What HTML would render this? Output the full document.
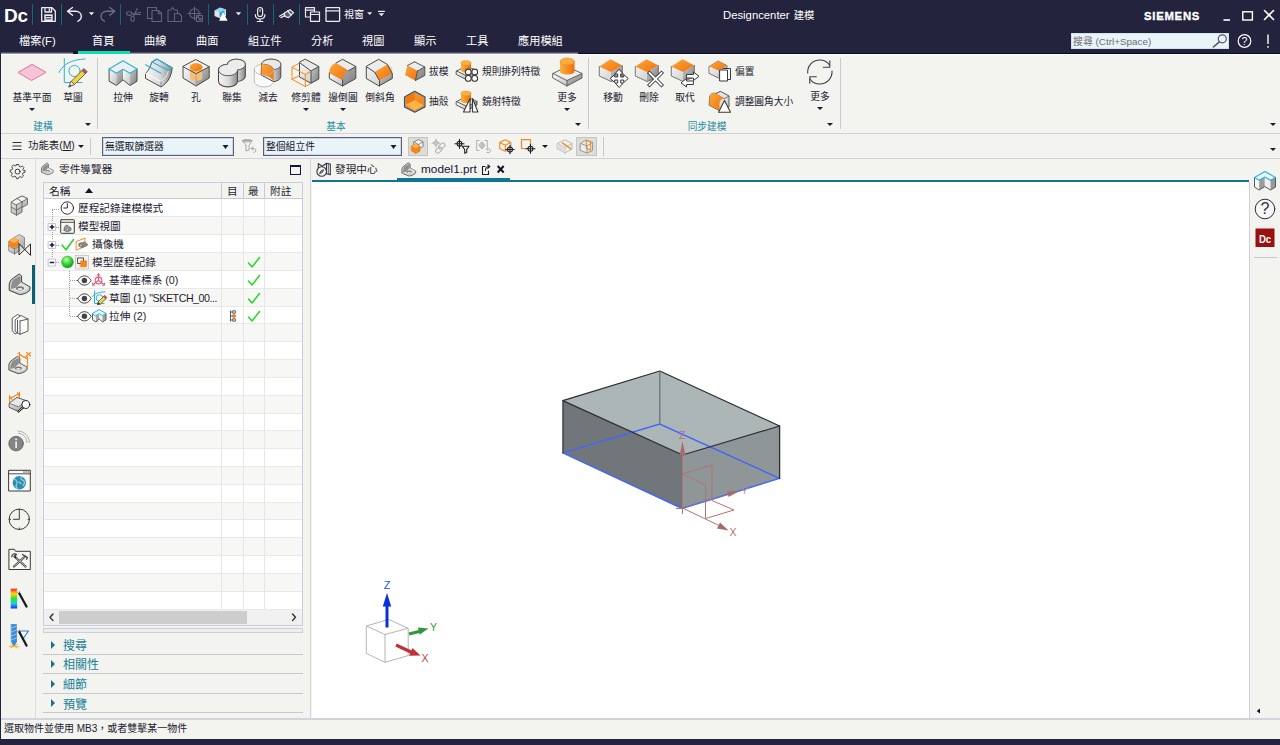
<!DOCTYPE html>
<html lang="zh-Hant">
<head>
<meta charset="utf-8">
<title>Designcenter 建模</title>
<style>
*{box-sizing:border-box;margin:0;padding:0}
html,body{width:1280px;height:745px;overflow:hidden}
body{position:relative;background:#f3f3ef;font-family:"Liberation Sans","Noto Sans CJK TC",sans-serif;font-size:10.67px;color:#1b1b30;-webkit-font-smoothing:antialiased}
.abs{position:absolute}
.t{position:absolute;white-space:nowrap;line-height:1}
svg{position:absolute;overflow:visible}
/* header */
#hdr{left:0;top:0;width:1280px;height:54px;background:#23233d}
#hdr .t{color:#fff}
.tab{font-size:11.2px;top:36px}
#uline{left:78px;top:51px;width:52px;height:3px;background:#0be0ae}
#search{left:1071px;top:33px;width:158px;height:16px;background:#e9f4f8;border:1px solid #d4e2ea}
#search .t{color:#6c6c7a;font-size:9.9px;left:1px;top:2.5px}
/* ribbon */
#ribbon{left:1px;top:54px;width:1279px;height:79px;background:#f3f3ef;border-top:1px solid #fdfdfd}
.rl{font-size:9.8px;color:#1b1b30;transform:translateX(-50%)}
.sl{font-size:9.7px;color:#1b1b30}
.gl{font-size:9.7px;color:#1d8ca3;transform:translateX(-50%);top:122px}
.vsep{position:absolute;width:1px;background:#c9c9d3}
.hsep{position:absolute;height:1px;background:#d2d2da}
.dd{position:absolute;width:0;height:0;border-left:3px solid transparent;border-right:3px solid transparent;border-top:3.5px solid #1b1b30;transform:translateX(-3px)}
/* selection bar */
.combo{position:absolute;top:137px;height:19px;background:#e9f4f8;border:1px solid #5c5c80;box-shadow:inset 0 0 0 1px #cfd6e6}
.combo .t{left:2px;top:4px;font-size:9.8px;color:#15152a}
.hl{position:absolute;background:#dcdcd8;border:1px solid #c4c4c0}
/* navigator */
#tree{left:43px;top:182px;width:260px;height:444px;background:#f0f0f0;border:1px solid #cdcde0;overflow:hidden}
.row{position:absolute;left:0;width:260px;height:18px;border-bottom:1px solid #e9e9e6;background:#fff}
.row.alt{background:#f7f7f5}
.tt{font-size:10.67px;color:#1b1b30}
.sec{font-size:12px;color:#1a8199;left:63px}
.tri{position:absolute;width:0;height:0;border-top:4px solid transparent;border-bottom:4px solid transparent;border-left:4.5px solid #1a7088}
#gfx{left:312px;top:182px;width:937px;height:536px;background:#fff}
</style>
</head>
<body>
<!-- ================= HEADER ================= -->
<div id="hdr" class="abs">
  <div class="t" style="left:4px;top:6px;font-size:19px;font-weight:bold;letter-spacing:-0.3px">Dc</div>
  <div class="abs" style="left:32px;top:4px;width:1px;height:21px;background:#0f6a72"></div>
  <div class="abs" style="left:61px;top:4px;width:1px;height:21px;background:#0f6a72"></div>
  <div class="abs" style="left:120px;top:4px;width:1px;height:21px;background:#0f6a72"></div>
  <div class="abs" style="left:208px;top:4px;width:1px;height:21px;background:#0f6a72"></div>
  <div class="abs" style="left:247px;top:4px;width:1px;height:21px;background:#0f6a72"></div>
  <div class="abs" style="left:273px;top:4px;width:1px;height:21px;background:#0f6a72"></div>
  <div class="abs" style="left:299px;top:4px;width:1px;height:21px;background:#0f6a72"></div>
  <div class="t" style="left:344px;top:10px;font-size:10px">視窗</div>
  <div class="t" style="left:723px;top:9px;font-size:11.3px;line-height:13px">Designcenter <span style="font-size:10.3px;margin-left:1px">建模</span></div>
  <div class="t" style="left:1144px;top:11px;font-size:11.3px;font-weight:bold;letter-spacing:0.75px;-webkit-text-stroke:0.35px #fff">SIEMENS</div>
  <div class="t tab" style="left:19px">檔案(F)</div>
  <div class="t tab" style="left:92px">首頁</div>
  <div class="t tab" style="left:144px">曲線</div>
  <div class="t tab" style="left:196px">曲面</div>
  <div class="t tab" style="left:248px">組立件</div>
  <div class="t tab" style="left:311px">分析</div>
  <div class="t tab" style="left:362px">視圖</div>
  <div class="t tab" style="left:414px">顯示</div>
  <div class="t tab" style="left:466px">工具</div>
  <div class="t tab" style="left:518px">應用模組</div>
  <div class="abs" style="left:1px;top:52px;width:577px;height:1px;background:#4e4e6a"></div><div class="abs" style="left:1px;top:53px;width:577px;height:1px;background:#9494ac"></div><div class="abs" style="left:578px;top:53px;width:702px;height:1px;background:#0a0a24"></div><div class="abs" style="left:73px;top:51px;width:5px;height:3px;background:#14142a"></div><div id="uline" class="abs"></div>
  <div id="search" class="abs"><div class="t">搜尋 (Ctrl+Space)</div></div>
</div>

<!-- header icons -->
<svg id="hicons" style="left:0;top:0" width="1280" height="53" viewBox="0 0 1280 53" fill="none" stroke-linecap="round" stroke-linejoin="round">
  <!-- save -->
  <g stroke="#ececf2" stroke-width="1.3">
    <path d="M41.7,7.7 H52 L55.3,11 V21.3 H41.7 Z"/>
    <path d="M45,7.7 V12 H51.5 V7.7"/>
    <rect x="44.3" y="14.3" width="8.4" height="7" fill="#ececf2" stroke="none"/>
  </g>
  <path d="M46,16.6 H51 M46,18.8 H51" stroke="#23233d" stroke-width="1"/>
  <path d="M49.3,8.6 V11" stroke="#ececf2" stroke-width="1.2"/>
  <!-- undo -->
  <path d="M72.5,7.5 L67.5,11.3 L72.5,15.2 M67.8,11.3 H75.5 C79.5,11.3 81.3,14 81.3,16.3 C81.3,18.5 80,20.3 77.8,21.3" stroke="#ececf2" stroke-width="1.4"/>
  <polygon points="88.8,12.3 94.2,12.3 91.5,15.3" fill="#ececf2"/>
  <!-- redo dim -->
  <path d="M109.8,7.5 L114.8,11.3 L109.8,15.2 M114.5,11.3 H106.8 C102.8,11.3 101,14 101,16.3 C101,18.5 102.3,20.3 104.5,21.3" stroke="#6d6d86" stroke-width="1.4"/>
  <!-- cut dim -->
  <g stroke="#62627c" stroke-width="1.1">
    <ellipse cx="129.3" cy="13.6" rx="2.6" ry="1.8"/>
    <ellipse cx="132.6" cy="18.7" rx="1.7" ry="2.5"/>
    <path d="M131.5,14 L140.5,12.5 M133.2,16.4 L137.5,8.3 M134,14.5 L140.5,14.5"/>
  </g>
  <!-- copy dim -->
  <g stroke="#62627c" stroke-width="1.1">
    <path d="M147.5,7.5 H156.5 V10.5 M152,18.5 H147.5 V7.5"/>
    <path d="M152,10.5 H158.5 L161.5,13.5 V21.5 H152 Z"/>
    <path d="M158.3,10.7 V13.7 H161.3"/>
  </g>
  <!-- paste dim -->
  <g stroke="#62627c" stroke-width="1.1">
    <path d="M174.5,21.5 H168 V10 H171 L172.7,7.5 L174.5,10 H177.5 V13"/>
    <path d="M174.5,13.5 H179 L181.5,16 V21.5 H174.5 Z"/>
  </g>
  <!-- target dim -->
  <g stroke="#62627c" stroke-width="1.1">
    <circle cx="194.5" cy="13.5" r="4.8"/>
    <path d="M194.5,7 V20 M188,13.5 H201"/>
    <path d="M196.5,15.5 H202.5 V21.5 H196.5 Z"/>
    <path d="M198,17 L201,20 M201,17.8 V20 H198.8"/>
  </g>
  <!-- colored cube + triangle -->
  <polygon points="214.5,10.5 220,7.5 226,9.5 226,16 220.5,18.5 214.5,16" fill="#dfe4e8"/>
  <polygon points="219.5,10.8 224.5,9 224.5,15.2 219.5,17.2" fill="#2aa6e0"/>
  <polygon points="215,10.8 220,8 225.8,9.6 220.8,12" fill="#8fd4f2"/>
  <polygon points="223,12 227.6,20.8 219.2,20.8" fill="#fff"/>
  <polygon points="235.8,12.3 241.2,12.3 238.5,15.3" fill="#ececf2"/>
  <!-- mic -->
  <g stroke="#ececf2" stroke-width="1.2">
    <rect x="257.6" y="7.5" width="5" height="9" rx="2.5"/>
    <path d="M255.3,14.5 C255.3,17.5 257.5,19 260.1,19 C262.7,19 264.9,17.5 264.9,14.5"/>
    <path d="M260.1,19 V21.3 M257.3,21.5 H262.9"/>
    <path d="M260.1,9.5 V11.5" stroke-width="1"/>
  </g>
  <!-- touch -->
  <g stroke="#ececf2" stroke-width="1.2">
    <path d="M284.5,13 L290,9.7 L293.6,12.6 L288.5,17.6 L284.3,16.2 Z" fill="#ececf2" fill-opacity=".25"/>
    <path d="M279.5,16.3 L284.5,13.2 M281,17.6 L285,15.5 M287.5,10.8 L291,15"/>
  </g>
  <!-- windows cascade -->
  <g stroke="#ececf2" stroke-width="1.2">
    <path d="M310,17 H305.5 V7.7 H314.5 V11.5"/>
    <path d="M305.5,10.2 H314.5"/>
    <rect x="310.5" y="12" width="9" height="9.3"/>
    <path d="M310.5,14.5 H319.5"/>
  </g>
  <!-- window -->
  <g stroke="#ececf2" stroke-width="1.3">
    <rect x="326" y="7.7" width="13.6" height="13.6" rx="0.5"/>
    <path d="M326,10.8 H339.6"/>
  </g>
  <polygon points="367.2,12.3 372.2,12.3 369.7,15.1" fill="#ececf2"/>
  <polygon points="378.6,13.2 384.2,13.2 381.4,16.3" fill="#ececf2"/>
  <path d="M378.4,11.4 H384.4" stroke="#ececf2" stroke-width="1.1"/>
  <!-- window controls -->
  <path d="M1223.5,20 H1230" stroke="#fff" stroke-width="1.6" stroke-linecap="butt"/>
  <rect x="1242.8" y="11.8" width="9.6" height="8.2" stroke="#fff" stroke-width="1.4" stroke-linejoin="miter"/>
  <path d="M1264.5,10.5 L1273.5,19.5 M1273.5,10.5 L1264.5,19.5" stroke="#fff" stroke-width="1.6"/>
  <!-- search magnifier -->
  <circle cx="1222.3" cy="38.8" r="4" stroke="#55556a" stroke-width="1.2"/>
  <path d="M1219.3,41.8 L1213.5,47" stroke="#55556a" stroke-width="1.6"/>
  <!-- help -->
  <circle cx="1244.5" cy="41" r="6.3" stroke="#fff" stroke-width="1.2"/>
  <!-- bang -->
  <path d="M1268,34.5 V44" stroke="#fff" stroke-width="1.4" stroke-linecap="butt"/>
  <path d="M1268,46 V47.8" stroke="#fff" stroke-width="1.4" stroke-linecap="butt"/>
  <text x="1244.5" y="44.7" font-size="10.5" fill="#fff" stroke="none" text-anchor="middle" font-family="Liberation Sans, sans-serif">?</text>
</svg>

<div class="abs" style="left:0;top:54px;width:1px;height:691px;background:#23233d"></div>

<!-- ================= RIBBON ================= -->
<div id="ribbon" class="abs"></div>
<!-- ribbon icons -->
<svg id="ricons" style="left:0;top:0" width="1280" height="160" viewBox="0 0 1280 160" stroke-linejoin="round" stroke-linecap="round">
  <defs>
    <linearGradient id="gL" x1="0" y1="0" x2="1" y2="1"><stop offset="0" stop-color="#fbfbfb"/><stop offset="1" stop-color="#c4c4c4"/></linearGradient>
    <linearGradient id="gD" x1="0" y1="0" x2="1" y2="1"><stop offset="0" stop-color="#c9c9c9"/><stop offset="1" stop-color="#7e7e7e"/></linearGradient>
    <linearGradient id="gT" x1="0" y1="0" x2="1" y2="1"><stop offset="0" stop-color="#ffffff"/><stop offset="1" stop-color="#dcdcdc"/></linearGradient>
    <linearGradient id="gH" x1="0" y1="0" x2="1" y2="0"><stop offset="0" stop-color="#f6f6f6"/><stop offset="0.55" stop-color="#d8d8d8"/><stop offset="1" stop-color="#8a8a8a"/></linearGradient>
    <linearGradient id="gO" x1="0" y1="0" x2="1" y2="1"><stop offset="0" stop-color="#fba83a"/><stop offset="1" stop-color="#f0720c"/></linearGradient>
    <linearGradient id="gOh" x1="0" y1="0" x2="1" y2="0"><stop offset="0" stop-color="#fbb040"/><stop offset="1" stop-color="#ee6f0a"/></linearGradient>
  </defs>
  <!-- 基準平面 -->
  <polygon points="18.3,72.3 32,64.3 46,72.3 32,80.3" fill="#f6c4d6" stroke="#e56f9c" stroke-width="1"/>
  <!-- 草圖 -->
  <g fill="none" stroke="#29b4dc" stroke-width="1">
    <path d="M64.3,58.5 V82.5 H82"/>
    <path d="M59,72.5 C63,64 72,59.5 85,59"/>
    <circle cx="74.5" cy="71" r="5.6"/>
  </g>
  <polygon points="71.3,81.3 82.3,70.3 85.5,73.5 74.5,84.5" fill="#f5d53e" stroke="#4a4a4a" stroke-width="0.8"/>
  <polygon points="82.3,70.3 84,68.600 87.200,71.800 85.500,73.500" fill="#e2445c" stroke="#4a4a4a" stroke-width="0.8"/>
  <polygon points="71.300,81.300 74.500,84.500 69,87" fill="#f2e6d0" stroke="#4a4a4a" stroke-width="0.8"/>
  <polygon points="69,87 70.300,84.700 71.400,85.900" fill="#222"/>
  <!-- 拉伸 -->
  <polygon points="109.1,69 116.4,73.3 116.4,85.5 109.1,81.2" fill="url(#gL)"/>
  <polygon points="116.4,73.3 123,69.3 123,79.8 116.4,85.5" fill="url(#gD)"/>
  <polygon points="123,69.3 130,73.3 130,85.5 123,79.8" fill="url(#gL)"/>
  <polygon points="130,73.3 137,69 137,81.2 130,85.5" fill="url(#gD)"/>
  <path d="M109.1,69 V81.2 L116.4,85.5 L123,79.8 L130,85.5 L137,81.2 V69" fill="none" stroke="#4a4a4a" stroke-width="1"/>
  <polygon points="109.1,69 123,60.8 137,69 130,73.3 123,69.3 116.4,73.3" fill="#efefef" stroke="#29b4dc" stroke-width="1.1"/>
  <!-- 旋轉 -->
  <path d="M152,62 C149.5,68 148.5,71 145.5,73.3 L145.5,78.4 L161,86.9 C168,83 171.5,76 172.2,67.7 L157.2,59.2 Z" fill="url(#gH)" stroke="#4a4a4a" stroke-width="1"/>
  <path d="M145.5,73.3 L161,81.5 C166,78 168,74 168.4,70.5" fill="none" stroke="#fafafa" stroke-width="0.9"/>
  <path d="M161,81.5 V86.9" fill="none" stroke="#6a6a6a" stroke-width="0.6"/>
  <path d="M152,62 L157.2,59.2 L172.2,67.7 L168.4,70.5 Z M145.5,64.8 L161,73.3" fill="none" stroke="#29b4dc" stroke-width="1.1"/>
  <!-- 孔 -->
  <polygon points="196.1,59.7 209.2,66.7 196.1,73.7 183,66.7" fill="#f1f1f1"/>
  <polygon points="183,66.7 196.1,73.7 196.1,86 183,78" fill="url(#gL)"/>
  <polygon points="196.1,73.7 209.2,66.7 209.2,78 196.1,86" fill="url(#gD)"/>
  <path d="M190,67.2 V78.5 C190,81.5 202.2,81.5 202.2,78.5 V67.2 Z" fill="#f2c07a"/>
  <ellipse cx="196.1" cy="67.2" rx="6.1" ry="3.7" fill="url(#gO)" stroke="#e88a20" stroke-width="0.5"/>
  <path d="M196.1,59.7 L209.2,66.7 V78 L196.1,86 L183,78 V66.7 Z M183,66.7 L196.1,73.7 L209.2,66.7" fill="none" stroke="#4a4a4a" stroke-width="1"/>
  <path d="M196.1,73.7 V86" fill="none" stroke="#8a8a8a" stroke-width="0.6"/>
  <!-- 聯集 -->
  <path d="M227.5,64.500 C227.5,61.5 231.5,59.2 236.500,59.2 C241.500,59.2 245.300,61.500 245.300,64.500 V76 C245.300,79 241.500,81.500 236.500,81.500 C231.500,81.500 227.500,79 227.500,76 Z" fill="url(#gH)" stroke="#4a4a4a" stroke-width="1.1"/>
  <path d="M218.500,70 C218.500,66.800 222.700,64.300 228,64.300 C233.300,64.300 237.500,66.800 237.500,70 V81.200 C237.500,84.400 233.300,86.900 228,86.900 C222.700,86.900 218.500,84.400 218.500,81.200 Z" fill="url(#gH)" stroke="#4a4a4a" stroke-width="1.1"/>
  <path d="M218.500,70 C218.500,66.800 222.700,64.300 227.600,64.300 C227.600,61.500 231.500,59.200 236.500,59.200 C241.500,59.200 245.300,61.500 245.300,64.500 C245.300,67.300 242,69.500 237.500,69.900 C237.500,73.200 233.300,75.700 228,75.700 C222.700,75.700 218.500,73.200 218.500,70 Z" fill="#ececec" stroke="#4a4a4a" stroke-width="0.9"/>
  <!-- 減去 -->
  <path d="M254.300,69.500 C254.300,66.500 258.600,64 264,64 C269.400,64 273.700,66.500 273.700,69.500 V81.400 C273.700,84.400 269.400,86.900 264,86.900 C258.600,86.900 254.300,84.400 254.300,81.400 Z" fill="#fbfbfb" stroke="#b4b4b4" stroke-width="0.9"/>
  <path d="M261.500,64.500 C261.500,61.500 265.800,59.200 271.200,59.200 C276.600,59.200 280.800,61.600 280.800,64.500 V76.500 C280.800,79 278,81 273.700,81.700 L261.500,75.200 Z" fill="url(#gH)" stroke="#4a4a4a" stroke-width="1"/>
  <path d="M261.500,64.200 C261.500,61.500 265.800,59.200 271.200,59.200 C276.600,59.200 280.800,61.600 280.800,64.500 C280.800,67 278,69 273.700,69.700 C273,66.500 268,64 261.500,64.200 Z" fill="#e9e9e9" stroke="#4a4a4a" stroke-width="0.8"/>
  <path d="M261.500,64.200 C268,64 273,66.500 273.700,69.700 V81.700 C273,78.300 268,75.500 261.500,75.200 Z" fill="url(#gO)"/>
  <path d="M254.300,69.500 C254.300,72.500 258.600,75 264,75 C269.400,75 273.700,72.500 273.700,69.500" fill="none" stroke="#b4b4b4" stroke-width="0.9"/>
  <path d="M261.500,64.200 V75.200" fill="none" stroke="#d9781a" stroke-width="0.5"/>
  <!-- 修剪體 -->
  <polygon points="305.5,59.3 318.8,66.5 318.8,79 311,83.3 299.5,77 299.5,62.5" fill="url(#gL)"/>
  <polygon points="311,71 318.8,66.5 318.8,79 311,83.3" fill="url(#gD)"/>
  <polygon points="299.500,62.5 305.5,59.3 318.8,66.5 311,71" fill="#e9e9e9"/>
  <path d="M305.5,59.3 L318.8,66.5 V79 L311,83.3 L299.5,77 V62.5 Z M299.5,62.5 L311,71 L318.8,66.5 M311,71 V83.3" fill="none" stroke="#4a4a4a" stroke-width="1"/>
  <path d="M299,63.3 L292,67.3 V79.3 L305.3,86.6 L311,83.5 M292,67.3 L305.3,74.5 V86.6 M305.3,74.5 L311,71.3 M292,79.3 L299.5,75.5" fill="none" stroke="#f5891f" stroke-width="1"/>
  <!-- 邊倒圓 -->
  <polygon points="342.5,59.3 355.8,66.5 355.8,78.5 342.5,86 329.3,78.5 329.3,73" fill="url(#gD)"/>
  <polygon points="336,63 342.5,59.3 355.8,66.5 348.5,70.7" fill="#ececec"/>
  <polygon points="329.3,73 342.5,80 342.5,86 329.3,78.5" fill="url(#gL)"/>
  <path d="M336,63 L348.5,70.7 C344.5,72.5 342.5,76 342.5,80 L329.3,73 C329.3,68.5 331.5,64.5 336,63 Z" fill="url(#gO)"/>
  <path d="M336,63 L342.5,59.3 L355.8,66.5 V78.5 L342.5,86 L329.3,78.5 V73 M348.5,70.7 L355.8,66.5 M342.5,80 V86" fill="none" stroke="#4a4a4a" stroke-width="1"/>
  <!-- 倒斜角 -->
  <polygon points="379,59.5 392.3,67.5 392.3,78.5 379,86 366.3,78.5 366.3,66.7" fill="url(#gL)"/>
  <polygon points="379,59.5 387.5,64.5 374.5,72 366.3,66.7" fill="#ececec"/>
  <polygon points="379.500,80.5 392.300,73.500 392.300,78.500 379,86" fill="url(#gD)"/>
  <polygon points="374.5,72 387.500,64.500 392.300,73.500 379.500,80.500" fill="url(#gO)"/>
  <path d="M379,59.5 L387.500,64.500 L392.300,73.500 V78.500 L379,86 L366.300,78.500 V66.700 Z M366.3,66.7 L374.5,72 L379.5,80.5 V86" fill="none" stroke="#4a4a4a" stroke-width="1"/>
  <!-- 拔模 -->
  <polygon points="414.5,61.8 424.8,67 424.8,75.5 415.5,80.5 405.200,75 407.5,65.500" fill="url(#gD)"/>
  <polygon points="414.5,61.8 424.8,67 417.5,71 407.5,65.5" fill="#ececec"/>
  <polygon points="407.5,65.5 417.5,71 415.5,80.500 405.200,75" fill="url(#gO)"/>
  <path d="M414.5,61.8 L424.8,67 V75.5 L415.5,80.5 M407.5,65.5 L414.5,61.8 M417.5,71 L424.8,67 M417.5,71 L415.500,80.500" fill="none" stroke="#4a4a4a" stroke-width="0.9"/>
  <!-- 抽殼 -->
  <polygon points="414.700,91.300 425,97 425,107 414.700,112.300 404.500,107 404.500,97" fill="#9a9a9a" stroke="#4a4a4a" stroke-width="1.100"/>
  <polygon points="414.700,92.800 423.700,97.700 423.700,106.300 414.700,110.800 405.800,106.300 405.800,97.700" fill="url(#gO)"/>
  <polygon points="414.700,100 423.5,96.5 423.5,105.500 414.700,110.500" fill="#f5891f"/>
  <polygon points="406,104.500 414.700,100 423.500,105.500 414.700,110.500" fill="#fbb54a"/>
  <polygon points="406,96.500 414.700,93 414.700,100 406,104.500" fill="#f07a12"/>
  <!-- 規則排列特徵 -->
  <polygon points="456.500,71.0 467,66.0 477,71.0 467,76.0" fill="#efefef"/><polygon points="456.500,71.0 467,76.0 467,80.0 456.500,74.5" fill="url(#gL)"/><polygon points="467,76.0 477,71.0 477,74.5 467,80.0" fill="url(#gD)"/><path d="M456.500,71.0 L467,66.0 L477,71.0 V74.5 L467,80.0 L456.500,74.5 Z M456.500,71.0 L467,76.0 L477,71.0" fill="none" stroke="#4a4a4a" stroke-width="0.900"/>
  <path d="M461,63 V70.500 C461,73 471,73 471,70.500 V63 Z" fill="url(#gOh)"/>
  <ellipse cx="466" cy="63" rx="5" ry="2.4" fill="#fbb040" stroke="#e8861a" stroke-width="0.4"/>
  <g fill="#fff" stroke="#3a3a3a" stroke-width="1.1">
    <circle cx="468.300" cy="72" r="2.900"/><circle cx="474.700" cy="72" r="2.900"/><circle cx="468.300" cy="78.400" r="2.900"/><circle cx="474.700" cy="78.400" r="2.900"/>
  </g>
  <!-- 鏡射特徵 -->
  <polygon points="456.500,101.5 467,96.5 477,101.5 467,106.5" fill="#efefef"/><polygon points="456.500,101.5 467,106.5 467,110.5 456.500,105.0" fill="url(#gL)"/><polygon points="467,106.5 477,101.5 477,105.0 467,110.5" fill="url(#gD)"/><path d="M456.500,101.5 L467,96.5 L477,101.5 V105.0 L467,110.5 L456.500,105.0 Z M456.500,101.5 L467,106.5 L477,101.5" fill="none" stroke="#4a4a4a" stroke-width="0.900"/>
  <path d="M461,93.500 V101 C461,103.500 471,103.500 471,101 V93.500 Z" fill="url(#gOh)"/>
  <ellipse cx="466" cy="93.500" rx="5" ry="2.400" fill="#fbb040" stroke="#e8861a" stroke-width="0.400"/>
  <polygon points="470,98.500 470,112 463.500,112" fill="#fff" stroke="#3a3a3a" stroke-width="1.1"/>
  <polygon points="472.500,98.500 472.500,112 478,112" fill="#fff" stroke="#3a3a3a" stroke-width="1.1"/>
  <!-- 更多 (basic) -->
  <polygon points="553,73.500 567,66.500 582,73.500 567,80.500" fill="#efefef"/>
  <polygon points="553,73.500 567,80.500 567,86 553,78" fill="url(#gL)"/>
  <polygon points="567,80.500 582,73.500 582,78 567,86" fill="url(#gD)"/>
  <path d="M553,73.500 L567,66.500 L582,73.500 V78 L567,86 L553,78 Z M553,73.500 L567,80.500 L582,73.500 M567,80.500 V86" fill="none" stroke="#555" stroke-width="0.900"/>
  <path d="M560,61.500 V71.500 C560,75.500 574.500,75.500 574.500,71.500 V61.500 Z" fill="url(#gOh)"/>
  <ellipse cx="567.250" cy="61.500" rx="7.250" ry="3.500" fill="#fbac3c" stroke="#e8861a" stroke-width="0.5"/>
  <!-- cubes for sync modeling -->
  <g id="ocube">
    <polygon points="599.3,66.500 610.500,59.300 622.300,65.500 622.300,77 611,81.500 599.300,76" fill="url(#gL)"/>
    <polygon points="611,72 622.300,65.500 622.300,77 611,81.500" fill="url(#gD)"/>
    <polygon points="599.300,66.500 610.500,59.300 622.300,65.500 611,72" fill="url(#gO)"/>
    <path d="M599.300,66.500 V76 L611,81.500 L622.300,77 V65.500" fill="none" stroke="#5a5a5a" stroke-width="0.8"/>
  </g>
  <use href="#ocube" x="36"/>
  <use href="#ocube" x="72"/>
  <!-- move arrows -->
  <g transform="translate(619.200,78.500)">
    <path d="M0,-9 L4,-4.500 H1.500 V-1.500 H4.500 V-4 L9,0 L4.500,4 V1.500 H1.500 V4.500 H4 L0,9 L-4,4.500 H-1.500 V1.500 H-4.500 V4 L-9,0 L-4.500,-4 V-1.500 H-1.500 V-4.500 H-4 Z" fill="#fff" stroke="#3a3a3a" stroke-width="1"/>
  </g>
  <!-- delete X -->
  <path d="M649.500,73 L661.500,85 M661.500,73 L649.500,85" stroke="#3a3a3a" stroke-width="3.600" fill="none" stroke-linecap="square"/>
  <path d="M649.500,73 L661.500,85 M661.500,73 L649.500,85" stroke="#fff" stroke-width="1.800" fill="none" stroke-linecap="square"/>
  <!-- replace arrows -->
  <path d="M687,74.500 H693.500 V72 L699,76.300 L693.500,80.500 V78 H687 Z" fill="#fff" stroke="#3a3a3a" stroke-width="1"/>
  <path d="M693,81 H686.500 V78.500 L681,82.800 L686.500,87 V84.500 H693 Z" fill="#fff" stroke="#3a3a3a" stroke-width="1"/>
  <!-- 偏置 -->
  <polygon points="709.300,66.500 718,61 727,65.500 727,74.500 718.500,78 709.300,73.500" fill="url(#gL)" stroke="#5a5a5a" stroke-width="0.8"/>
  <polygon points="709.300,66.500 718,61 727,65.500 718.500,70.500" fill="url(#gO)"/>
  <polygon points="718.500,70.500 727,65.500 727,74.500 718.500,78" fill="url(#gD)"/>
  <path d="M723,68.500 H730.500 V79.500 H723" fill="#fff" stroke="#3a3a3a" stroke-width="1"/>
  <rect x="720" y="70" width="7.500" height="11" fill="#fff" stroke="#3a3a3a" stroke-width="1"/>
  <!-- 調整圓角大小 -->
  <path d="M709.500,98 C709.500,94 713,92.500 716,93.500 L720.500,91.500 L729,96 V107 L720.500,111 L709.500,105.500 Z" fill="url(#gL)" stroke="#4a4a4a" stroke-width="0.9"/>
  <path d="M716,93.500 L720.500,91.500 L729,96 L724.500,98.500 Z" fill="#e4e4e4" stroke="#4a4a4a" stroke-width="0.7"/>
  <path d="M709.500,105.500 V98 C709.500,94 713,92.500 716,93.500 L724.500,98.500 C721,98.500 719.500,101 719.500,105 V110.500 Z" fill="url(#gO)"/>
  <polygon points="724.500,100.500 730.500,112.300 718.500,112.300" fill="#fff" stroke="#3a3a3a" stroke-width="1.1"/>
  <!-- 更多 refresh -->
  <g fill="none" stroke="#3c3c4c" stroke-width="1.1">
    <path d="M807.700,73 C807.200,66 812.500,60 819.800,60 C824,60 827.500,62 829.500,65"/>
    <path d="M829.800,60.800 V67.300 H823.300"/>
    <path d="M832,71 C832.500,78 827,84 819.800,84 C815.500,84 812,82 810,79"/>
    <path d="M809.800,83.300 V76.800 H816.300"/>
  </g>
</svg>
<div class="t rl" style="left:32px;top:93px">基準平面</div>
<div class="t rl" style="left:73px;top:93px">草圖</div>
<div class="dd" style="left:32px;top:108px"></div>
<div class="t gl" style="left:43px">建構</div>
<div class="dd" style="left:88px;top:123px"></div>
<div class="vsep" style="left:97px;top:58px;height:71px"></div>

<div class="t rl" style="left:123px;top:93px">拉伸</div>
<div class="t rl" style="left:159px;top:93px">旋轉</div>
<div class="t rl" style="left:196px;top:93px">孔</div>
<div class="t rl" style="left:232px;top:93px">聯集</div>
<div class="t rl" style="left:268px;top:93px">減去</div>
<div class="t rl" style="left:306px;top:93px">修剪體</div>
<div class="t rl" style="left:343px;top:93px">邊倒圓</div>
<div class="t rl" style="left:380px;top:93px">倒斜角</div>
<div class="dd" style="left:306px;top:108px"></div>
<div class="dd" style="left:343px;top:108px"></div>
<div class="t sl" style="left:429px;top:67px">拔模</div>
<div class="t sl" style="left:429px;top:97px">抽殼</div>
<div class="t sl" style="left:482px;top:67px">規則排列特徵</div>
<div class="t sl" style="left:482px;top:97px">鏡射特徵</div>
<div class="t rl" style="left:567px;top:93px">更多</div>
<div class="dd" style="left:567px;top:108px"></div>
<div class="t gl" style="left:336px">基本</div>
<div class="dd" style="left:578px;top:123px"></div>
<div class="vsep" style="left:588px;top:58px;height:71px"></div>

<div class="t rl" style="left:613px;top:93px">移動</div>
<div class="t rl" style="left:649px;top:93px">刪除</div>
<div class="t rl" style="left:685px;top:93px">取代</div>
<div class="t sl" style="left:735px;top:67px">偏置</div>
<div class="t sl" style="left:735px;top:97px">調整圓角大小</div>
<div class="t rl" style="left:820px;top:92px">更多</div>
<div class="dd" style="left:820px;top:107px"></div>
<div class="t gl" style="left:707px">同步建模</div>
<div class="dd" style="left:830px;top:123px"></div>
<div class="vsep" style="left:840px;top:58px;height:71px"></div>
<div class="dd" style="left:1273px;top:123px"></div>
<div class="hsep" style="left:1px;top:133px;width:1279px"></div>

<!-- ================= SELECTION BAR ================= -->
<div class="t" style="left:28px;top:141px;font-size:10.4px">功能表(<span style="text-decoration:underline">M</span>)</div>
<div class="dd" style="left:81px;top:145px"></div>
<div class="vsep" style="left:90px;top:138px;height:17px"></div>
<div class="combo" style="left:102px;width:132px"><div class="t">無選取篩選器</div></div>
<div class="dd" style="left:226px;top:145px;border-left-width:3.5px;border-right-width:3.5px;border-top-width:4px;transform:translateX(-3.5px)"></div>
<div class="combo" style="left:263px;width:139px"><div class="t">整個組立件</div></div>
<div class="dd" style="left:394px;top:145px;border-left-width:3.5px;border-right-width:3.5px;border-top-width:4px;transform:translateX(-3.5px)"></div>
<div class="hl" style="left:408px;top:137px;width:20px;height:19px"></div>
<div class="hl" style="left:576px;top:137px;width:21px;height:19px"></div>
<div class="dd" style="left:545px;top:145px"></div>
<div class="vsep" style="left:603px;top:137px;height:19px"></div>
<!-- selbar icons -->
<svg id="sicons" style="left:0;top:0" width="1280" height="160" viewBox="0 0 1280 160" fill="none" stroke-linejoin="round" stroke-linecap="round">
  <path d="M12.500,142.500 H21.500 M12.500,146 H21.500 M12.500,149.500 H21.500" stroke="#333340" stroke-width="1.1" stroke-linecap="butt"/>
  <!-- filter reset (dim) -->
  <g stroke="#a9a9ad" stroke-width="1">
    <path d="M242.500,140.500 H252 L249,145.500 V150 L246,151 V145.500 Z"/>
    <ellipse cx="247.300" cy="140.700" rx="4.700" ry="1.200"/>
    <path d="M251.500,148.500 H254 C256.500,148.500 256.500,152.500 254,152.500 M253,146.500 L251,148.500 L253,150.500"/>
  </g>
  <!-- icon1 cubes -->
  <polygon points="414,142 418.500,139.500 423,142 423,146.500 418.500,149 414,146.500" fill="#f4f4f4" stroke="#6a6a6a" stroke-width="0.8"/>
  <path d="M414,142 L418.500,144.500 L423,142 M418.500,144.500 V149" stroke="#6a6a6a" stroke-width="0.7"/>
  <polygon points="411.500,146 415.800,143.800 420,146 420,151 415.800,153.500 411.500,151" fill="#f5861a" stroke="#d96d0a" stroke-width="0.6"/>
  <polygon points="411.500,146 415.800,143.800 420,146 415.800,148.200" fill="#fbb257"/>
  <!-- icon2 dim crosshair + chain -->
  <g stroke="#b1b1b5" stroke-width="1">
    <circle cx="436" cy="143" r="2.300"/>
    <path d="M436,139 V147 M432,143 H440"/>
    <rect x="438.300" y="144" width="7" height="4.200" rx="2.100" transform="rotate(-40 441.800 146.100)"/>
    <rect x="435.300" y="148" width="7" height="4.200" rx="2.100" transform="rotate(-40 438.800 150.100)"/>
  </g>
  <!-- icon3 crosshair + funnel -->
  <g stroke="#1f1f28" stroke-width="1.100">
    <circle cx="459.500" cy="143.700" r="2.400"/>
    <path d="M459.500,139.300 V148.200 M455,143.700 H464"/>
    <path d="M462.300,146.300 H469 L466.700,149.500 V152.500 L464.700,153.300 V149.500 Z" fill="#f3f3ef"/>
  </g>
  <!-- icon4 dim brackets -->
  <g stroke="#b1b1b5" stroke-width="1">
    <path d="M479,140.500 H476.700 V150.500 H479 M485,140.500 H487.300 V147"/>
    <path d="M482,142 L485,145.500 L482,149 L479,145.500 Z" fill="#c4c4c8"/>
    <path d="M486.500,149 H489 C491,149 491,152.500 489,152.500 H487 M488,147.500 L486.300,149 L488,150.500"/>
  </g>
  <!-- icon5 orange cube + crosshair -->
  <g stroke="#f28a1e" stroke-width="1.100">
    <path d="M499.700,142.500 L505,139.700 L510.800,142.500 V148.500 L505.300,151.300 L499.700,148.500 Z M499.700,142.500 L505.300,145.300 L510.800,142.500 M505.300,145.300 V151.300"/>
  </g>
  <g stroke="#1f1f28" stroke-width="1.100">
    <circle cx="510" cy="149.500" r="2.500" fill="#f3f3ef"/>
    <path d="M510,145.300 V153.700 M505.800,149.500 H514.200"/>
  </g>
  <!-- icon6 orange square + crosshair -->
  <path d="M530.500,148.500 H521.500 V139.700 H530.500 V144.500" stroke="#f28a1e" stroke-width="1.200"/>
  <g stroke="#1f1f28" stroke-width="1.100">
    <circle cx="530.500" cy="148.700" r="2.500" fill="#f3f3ef"/>
    <path d="M530.500,144.300 V153.200 M526,148.700 H535"/>
  </g>
  <!-- icon7 gray cube orange edge -->
  <polygon points="557.500,143.500 565,139.700 572,143.500 572,149 565,153 557.500,149" fill="#efefef" stroke="#b4b4b4" stroke-width="0.900"/>
  <path d="M557.500,143.500 L565,147.300 L572,143.500 M565,147.300 V153" stroke="#b4b4b4" stroke-width="0.800"/>
  <polygon points="557.500,143.500 565,147.300 565,153 557.500,149" fill="#dedede"/>
  <path d="M562.500,143 L571,148.800" stroke="#f28a1e" stroke-width="1.400"/>
  <!-- icon8 gray wire + orange face -->
  <g stroke="#8e8e96" stroke-width="0.900">
    <path d="M580.500,143.500 L586,140 L592.500,142.500 V150.500 L587,153 L580.500,150.500 Z" fill="#ececec"/>
    <path d="M580.500,143.500 L587,146 L592.500,142.500 M587,146 V153"/>
  </g>
  <path d="M586.300,140.300 L590.700,142.300 V150.300 L586.300,148.200 Z" stroke="#f28a1e" stroke-width="1.100"/>
</svg>
<div class="dd" style="left:1273px;top:148px"></div>
<div class="hsep" style="left:1px;top:158px;width:1279px"></div>

<!-- ================= LEFT RESOURCE BAR ================= -->
<div class="vsep" style="left:35px;top:159px;height:559px;background:#dcdce2"></div>
<div class="abs" style="left:32px;top:265px;width:3px;height:39px;background:#0c6070"></div>

<!-- left icons -->
<svg id="licons" style="left:0;top:0" width="40" height="745" viewBox="0 0 40 745" fill="none" stroke-linejoin="round" stroke-linecap="round">
  <defs>
    <linearGradient id="lgR" x1="0" y1="0" x2="0" y2="1"><stop offset="0" stop-color="#ff1a1a"/><stop offset="0.25" stop-color="#ffd21a"/><stop offset="0.5" stop-color="#2fe02f"/><stop offset="0.75" stop-color="#1ad0e0"/><stop offset="1" stop-color="#1a2aff"/></linearGradient>
    <linearGradient id="lgG" x1="0" y1="0" x2="1" y2="1"><stop offset="0" stop-color="#f2f2f2"/><stop offset="1" stop-color="#9a9a9a"/></linearGradient>
  <g id="brk">
      <path d="M10.500,0.200 L12.600,2 V8.200 L21,12.900 V15 C21,17.500 15,20.600 10.500,20.600 L0.200,16.300 V10.800 C0.200,8 2,5.500 4,4.300 Z" fill="#c9c9c9" stroke="#3e3e3e" stroke-width="1"/>
      <path d="M4.500,5.600 L10.500,2.300 L11.500,3.200 V9 L6.500,14 L2,15 C2,11 3,7.500 4.500,5.600 Z" fill="#8e8e8e"/>
      <path d="M2,15.300 L6.500,14 L11.500,9 L12.600,8.800 L20,13 C18.500,16.300 14,18.300 10.500,18.300 Z" fill="#e2e2e2"/>
      <ellipse cx="11" cy="14.300" rx="4" ry="2.100" fill="#777"/>
      <ellipse cx="11" cy="15" rx="2.600" ry="1.100" fill="#ececec"/>
    </g>
  </defs>
  <!-- gear -->
  <g transform="translate(17.600,171.300)" stroke="#3a3a44" stroke-width="1">
    <path d="M-1.300,-7 H1.300 L1.800,-5 L3.200,-4.400 L5,-5.400 L6.800,-3.600 L5.700,-1.900 L6.200,-0.600 L8,0 V0 M-1.300,-7 L-1.800,-5 L-3.200,-4.400 L-5,-5.400" stroke="none"/>
    <path d="M-1.200,-7 L1.200,-7 L1.700,-5.100 L3.100,-4.500 L4.800,-5.500 L6.500,-3.800 L5.500,-2.100 L6.100,-0.700 L8,-0.200 L8,0" stroke="none"/>
    <path d="M-1.100,-6.800 H1.100 L1.600,-4.900 L3,-4.300 L4.700,-5.300 L6.300,-3.700 L5.300,-2 L5.900,-0.600 H5.900 L7.400,-1.100 L7.400,1.100 L5.500,1.600 L4.900,3 L5.900,4.700 L4.300,6.300 L2.600,5.300 L1.200,5.900 L0.700,7.400 H-1.100 L-1.600,5.500 L-3,4.900 L-4.700,5.900 L-6.300,4.300 L-5.300,2.600 L-5.900,1.200 L-7.400,0.700 V-1.100 L-5.500,-1.600 L-4.900,-3 L-5.900,-4.700 L-4.300,-6.300 L-2.600,-5.300 L-1.600,-5.700 Z" stroke-width="0.900"/>
    <circle cx="0" cy="0.300" r="2.500"/>
  </g>
  <!-- assembly -->
  <g stroke="#5a5a5a" stroke-width="0.800">
    <polygon points="11.500,202 17,198.500 22,196 27.500,198.500 27.500,204.500 22,207.500 22,212 16.500,215.300 11.500,212.500" fill="url(#lgG)"/>
    <polygon points="11.500,202 17,198.500 22,196 27.500,198.500 22,201.800 16.500,204.800" fill="#f2f2f2"/>
    <path d="M16.500,204.800 V215.300 M11.500,207.300 L16.500,210 L22,207 M22,201.800 V207.500 M17,198.500 L22,201.800"/>
  </g>
  <!-- constraint -->
  <g stroke="#6a6a6a" stroke-width="0.700">
    <polygon points="9,241 14,237.500 19.500,234.500 24.500,237.500 24.500,248 19.500,251 14.500,254 9,251" fill="url(#lgG)"/>
    <path d="M9,246 L14.500,249 L19.500,246 M14.500,243.500 V254"/>
  </g>
  <polygon points="9,240.500 14,237.500 19,240 19,245.500 14,248.500 9,246" fill="#f5861a"/>
  <polygon points="9,240.500 14,237.500 19,240 14,243" fill="#fbb257"/>
  <path d="M19,244 V255 L30.500,244 V255 Z" fill="#f3f3ef" fill-opacity="0.600" stroke="#222" stroke-width="1"/>
  <!-- part navigator -->
  <use href="#brk" x="9" y="274"/>
  <!-- books -->
  <g stroke="#4a4a4a" stroke-width="0.900" fill="#fbfbfb">
    <path d="M12.500,318 L17.500,314.500 L20,315.800 V331.500 L15,334 L12.500,331 Z"/>
    <path d="M15.500,319.500 L21,315.500 L23.500,316.800 L28,319 V331 L20,334.300 L15.500,331.500 Z"/>
    <path d="M20,321 L28,319 M20,321 V334.300 M17.500,320.300 V332.800"/>
  </g>
  <!-- PMI -->
  <use href="#brk" transform="translate(8.700,356.300) scale(0.880,0.840)"/>
  <g stroke="#f28a1e" stroke-width="1.100">
    <path d="M19.500,352.500 V357 M27.500,357 V367 M19.500,354.500 L27,358.800 M18,353 L21.500,355.500 M24,357.500 L26.500,356.500 M26.500,352.500 L30.500,356 M30.500,352.500 L26.500,356"/>
  </g>
  <!-- measure -->
  <polygon points="9.500,403 17,397.500 27,401 27,406 18.500,411.500 9.500,407.500" fill="url(#lgG)" stroke="#4a4a4a" stroke-width="0.900"/>
  <polygon points="9.500,403 17,397.500 27,401 18.500,406.500" fill="#e9e9e9" stroke="#4a4a4a" stroke-width="0.600"/>
  <g stroke="#f28a1e" stroke-width="1.100"><path d="M9.500,395.500 V402 M19.500,392 V397.500 M10,398.500 L19,393.800 M10,396.500 L12,399.500 M17.500,392.800 L19,396"/></g>
  <path d="M22.500,407.500 L18.500,411.500" stroke="#222" stroke-width="2.200"/>
  <path d="M22.500,407.500 L18.800,411.200" stroke="#ddd" stroke-width="0.800"/>
  <circle cx="25.800" cy="404.500" r="4" fill="#fff" stroke="#222" stroke-width="1"/>
  <!-- info -->
  <circle cx="16.100" cy="443.600" r="7.300" fill="#858585" stroke="#5a5a5a" stroke-width="0.800"/>
  <path d="M16.100,441.500 V448" stroke="#fff" stroke-width="1.500" stroke-linecap="butt"/>
  <circle cx="16.100" cy="439.300" r="0.900" fill="#fff"/>
  <path d="M18.500,433.300 C23.500,433.800 26.500,437.500 27,442.500 M18,431 C25,431.300 29,436.500 29.500,442.500" stroke="#a4a4a4" stroke-width="0.900"/>
  <!-- web -->
  <rect x="9" y="470.300" width="21.300" height="20.700" fill="#fbfbfb" stroke="#3a3a3a" stroke-width="1"/>
  <path d="M9,473.800 H30.300" stroke="#3a3a3a" stroke-width="0.900"/>
  <path d="M23.500,472 H24.500 M25.800,472 H26.800 M28,472 H29" stroke="#3a3a3a" stroke-width="0.800"/>
  <circle cx="19.300" cy="482.700" r="6.700" fill="#2c8eae"/>
  <path d="M14.500,479 C17,480.500 18,482 16.500,484.500 C15.500,486 16,487.500 17.500,488.800 M21.500,476.500 C20,478.500 21.500,480 23.500,480.500 C25,481.500 24.500,484 23,485.500 M19,482 L21,483.500" stroke="#8fd0e4" stroke-width="1.300" fill="none"/>
  <!-- clock -->
  <circle cx="19.300" cy="519.300" r="10.200" stroke="#3a3a3a" stroke-width="1"/>
  <path d="M19.300,511.500 V519.300 H13.500 M19.300,509.200 V510.700 M19.300,528 V529.500 M29.500,519.300 H28 M9.200,519.300 H10.700" stroke="#3a3a3a" stroke-width="1"/>
  <!-- tools folder -->
  <path d="M9.300,549.300 H14.500 L15.500,551.300 H30.300 V569.500 H9.300 Z" stroke="#3a3a3a" stroke-width="1" fill="#f7f7f5"/>
  <g stroke="#3a3a3a" stroke-width="2.200"><path d="M14.500,556.500 L25.500,566.500 M25,556.500 L14,566.500"/></g>
  <g stroke="#e9e9e9" stroke-width="0.800"><path d="M14.500,556.500 L25.500,566.500 M25,556.500 L14,566.500"/></g>
  <path d="M11.800,556.800 C11.800,554 14.800,553 16.500,554.500 L14.300,556.500 L15.800,558 M22.500,554.500 L27.500,557.500 L26.500,559.300" stroke="#3a3a3a" stroke-width="1.200"/>
  <!-- colour bar + pen -->
  <rect x="10.700" y="588.700" width="6.500" height="19.800" fill="url(#lgR)"/>
  <path d="M18.500,592 L26.500,606.500" stroke="#1a1a1a" stroke-width="2.300"/>
  <path d="M17.600,590.500 L18.500,592" stroke="#eee" stroke-width="2"/>
  <!-- drill + pen -->
  <path d="M11.500,624.500 H16.500 V642 L14,646 L11.500,642 Z" fill="#3a8fd8" stroke="#2a6fb8" stroke-width="0.600"/>
  <path d="M11.500,628 L16.500,626 M11.500,632 L16.500,630 M11.500,636 L16.500,634 M11.500,640 L16.500,638" stroke="#9fd0f4" stroke-width="0.800"/>
  <path d="M9,646.500 H19 M10.500,644.500 L17.500,648 M17.500,644.500 L10.500,648" stroke="#f2b01e" stroke-width="0.800"/>
  <path d="M19,631 H28.500 L22.500,639.500" stroke="#3a7fd0" stroke-width="1.200"/>
  <path d="M18.500,630.500 L26.500,645.500" stroke="#1a1a1a" stroke-width="2.300"/>
  <path d="M17.600,629 L18.500,630.500" stroke="#eee" stroke-width="2"/>
</svg>
<!-- ================= NAVIGATOR ================= -->
<div class="t" style="left:59px;top:164px;font-size:10.67px">零件導覽器</div>
<div class="abs" style="left:290px;top:165px;width:11px;height:10px;border:1px solid #15153a;border-top-width:2px"></div>
<div id="tree" class="abs">
  <div class="row" style="top:0;height:16px;background:#f3f3ef;border-bottom:1px solid #c9c9d3"></div>
  <div class="row" style="top:16px;height:18px"></div>
  <div class="row alt" style="top:34px;height:18px"></div>
  <div class="row" style="top:52px;height:18px"></div>
  <div class="row alt" style="top:70px;height:18px"></div>
  <div class="row" style="top:88px;height:18px"></div>
  <div class="row alt" style="top:106px;height:18px"></div>
  <div class="row" style="top:124px;height:17px"></div>
  <div class="row alt" style="top:141px;height:18px"></div>
  <div class="row" style="top:159px;height:18px"></div>
  <div class="row alt" style="top:177px;height:18px"></div>
  <div class="row" style="top:195px;height:18px"></div>
  <div class="row alt" style="top:213px;height:18px"></div>
  <div class="row" style="top:231px;height:17px"></div>
  <div class="row alt" style="top:248px;height:18px"></div>
  <div class="row" style="top:266px;height:18px"></div>
  <div class="row alt" style="top:284px;height:18px"></div>
  <div class="row" style="top:302px;height:18px"></div>
  <div class="row alt" style="top:320px;height:17px"></div>
  <div class="row" style="top:337px;height:18px"></div>
  <div class="row alt" style="top:355px;height:18px"></div>
  <div class="row" style="top:373px;height:18px"></div>
  <div class="row alt" style="top:391px;height:18px"></div>
  <div class="row" style="top:409px;height:18px"></div>
</div>
<div class="vsep" style="left:221px;top:183px;height:427px;background:#e6e6e4"></div>
<div class="vsep" style="left:243px;top:183px;height:427px;background:#e6e6e4"></div>
<div class="vsep" style="left:264px;top:183px;height:427px;background:#e6e6e4"></div>
<div class="vsep" style="left:221px;top:183px;height:16px"></div>
<div class="vsep" style="left:243px;top:183px;height:16px"></div>
<div class="vsep" style="left:264px;top:183px;height:16px"></div>
<div class="t tt" style="left:49px;top:186px">名稱</div>
<div class="abs" style="left:85px;top:188px;width:0;height:0;border-left:4px solid transparent;border-right:4px solid transparent;border-bottom:5px solid #15152a"></div>
<div class="t tt" style="left:227px;top:186px">目</div>
<div class="t tt" style="left:248px;top:186px">最</div>
<div class="t tt" style="left:270px;top:186px">附註</div>
<div class="t tt" style="left:78px;top:203px">歷程記錄建模模式</div>
<div class="t tt" style="left:78px;top:221px">模型視圖</div>
<div class="t tt" style="left:92px;top:239px">攝像機</div>
<div class="t tt" style="left:92px;top:257px">模型歷程記錄</div>
<div class="t tt" style="left:109px;top:275px">基準座標系 (0)</div>
<div class="t tt" style="left:109px;top:293px">草圖 (1) <span style="letter-spacing:-0.45px">"SKETCH_00...</span></div>
<div class="t tt" style="left:109px;top:311px">拉伸 (2)</div>

<!-- tree icons -->
<svg id="ticons" style="left:0;top:0" width="320" height="745" viewBox="0 0 320 745" fill="none" stroke-linejoin="round" stroke-linecap="round">
  <defs>
    <radialGradient id="gBall" cx="0.4" cy="0.3" r="0.7"><stop offset="0" stop-color="#c8ffb0"/><stop offset="0.5" stop-color="#3ddc3a"/><stop offset="1" stop-color="#159a20"/></radialGradient>
    <g id="eye">
      <path d="M-6.700,0 C-4.500,-3.800 -1.800,-4.600 0,-4.600 C1.800,-4.600 4.500,-3.800 6.700,0 C4.500,3.800 1.800,4.600 0,4.600 C-1.800,4.600 -4.500,3.800 -6.700,0 Z" fill="#fff" stroke="#3c3c3c" stroke-width="1"/>
      <circle cx="0" cy="0" r="2.700" fill="#444"/>
    </g>
    <g id="chk"><path d="M-5.500,0.500 L-2,4.500 L5.500,-5" stroke="#25d82a" stroke-width="1.500" fill="none"/></g>
  </defs>
  <!-- dotted connectors -->
  <g stroke="#9c9c9c" stroke-width="1" stroke-dasharray="1,1" stroke-linecap="butt">
    <path d="M52,209.500 H60 M52.500,210 V222 M52.500,232 V240 M52.500,250 V258 M56,227.500 H60 M56,245.500 H60 M56,262.500 H60"/>
    <path d="M69.500,271 V317 M70,280.500 H78 M70,298.500 H78 M70,316.500 H78"/>
  </g>
  <!-- expanders -->
  <g stroke="#c4c4d4" stroke-width="1" fill="#fff">
    <rect x="48.500" y="223.500" width="7" height="7"/><rect x="48.500" y="241.500" width="7" height="7"/><rect x="48.500" y="259" width="7" height="7"/>
  </g>
  <path d="M49.700,227 H54.300 M52,224.700 V229.300 M49.700,245 H54.300 M52,242.700 V247.300 M49.700,262.500 H54.300" stroke="#1b1b40" stroke-width="1.600" stroke-linecap="butt"/>
  <!-- clock -->
  <circle cx="67.300" cy="208" r="6.200" stroke="#2e2e2e" stroke-width="1" fill="#fff"/>
  <path d="M67.300,203.500 V208 H63.800" stroke="#2e2e2e" stroke-width="1"/>
  <!-- model view -->
  <rect x="60.700" y="219.700" width="13.600" height="13.600" rx="0.600" stroke="#3a3a3a" stroke-width="1" fill="#f7f7f5"/>
  <path d="M60.700,222.300 H74.300" stroke="#3a3a3a" stroke-width="0.900"/>
  <path d="M64,229.500 C64,227 65.500,225.300 67,225 L71,228 V230.300 L67.500,231.800 L64,230.500 Z" fill="#9c9c9c" stroke="#555" stroke-width="0.700"/>
  <ellipse cx="67.500" cy="229.300" rx="1.500" ry="0.900" fill="#e4e4e4" stroke="#555" stroke-width="0.400"/>
  <!-- row3: check + camera -->
  <path d="M62,245 L66,249.800 L73.500,239.500" stroke="#25d82a" stroke-width="1.600"/>
  <path d="M76.500,241.500 L85,238 V246.500 L76.500,250 Z" stroke="#f28a1e" stroke-width="1"/>
  <path d="M79,243.300 L84,242 L86.500,243.300 V246 L81.500,247.500 L79,246.300 Z" fill="#8d8d8d" stroke="#555" stroke-width="0.500"/>
  <circle cx="81" cy="245.300" r="1.600" fill="#bbb" stroke="#555" stroke-width="0.500"/>
  <circle cx="86.800" cy="244.700" r="1.100" fill="#777"/>
  <!-- row4: ball + feature icon -->
  <circle cx="67.500" cy="262" r="5.900" fill="url(#gBall)" stroke="#1e9a28" stroke-width="0.500"/>
  <rect x="75.500" y="255.500" width="13" height="13.500" fill="#f1f1ef" stroke="#bdbdbd" stroke-width="0.800" stroke-dasharray="1.500,1"/>
  <rect x="78" y="258" width="5.500" height="5.500" fill="#fff" stroke="#333" stroke-width="0.900"/>
  <rect x="80.500" y="260.800" width="6" height="6" fill="#f5861a" stroke="#e06c0a" stroke-width="0.500"/>
  <!-- eyes -->
  <use href="#eye" x="84.400" y="280.500"/><use href="#eye" x="84.400" y="298.500"/><use href="#eye" x="84.400" y="316.300"/>
  <!-- csys pink -->
  <g stroke="#e0567c" stroke-width="1.100">
    <circle cx="98.500" cy="280.500" r="3.400"/>
    <path d="M98.500,280.500 V274 M98.500,280.500 L92.800,284.800 M98.500,280.500 L104.300,284.800"/>
    <path d="M97,275.500 L98.500,273.500 L100,275.500 M92.500,283 L92.500,285 L94.500,285.300 M104.500,283 L104.500,285 L102.500,285.300" stroke-width="0.900"/>
  </g>
  <!-- sketch small -->
  <g stroke="#29b4dc" stroke-width="1">
    <path d="M94.500,291 V303.500 H104"/>
    <path d="M92.500,296.500 C95,293.500 99,292 105,291.800"/>
    <circle cx="99.500" cy="298" r="3.300"/>
  </g>
  <polygon points="98,302 103.700,296.300 106,298.600 100.300,304.300" fill="#f5d53e" stroke="#3a3a3a" stroke-width="0.700"/>
  <polygon points="98,302 100.300,304.300 97,305.300" fill="#222"/>
  <polygon points="103.700,296.300 104.700,295.300 107,297.600 106,298.600" fill="#e2445c" stroke="#3a3a3a" stroke-width="0.500"/>
  <!-- extrude small -->
  <polygon points="92.500,313.500 96,315.600 96,322 92.500,319.800" fill="#f4f4f4"/>
  <polygon points="96,315.600 99.200,313.700 99.200,319 96,322" fill="#a8a8a8"/>
  <polygon points="99.200,313.700 102.500,315.600 102.500,322 99.200,319" fill="#f0f0f0"/>
  <polygon points="102.500,315.600 106,313.500 106,319.800 102.500,322" fill="#a0a0a0"/>
  <path d="M92.500,313.500 V319.800 L96,322 L99.200,319 L102.500,322 L106,319.800 V313.500" stroke="#4a4a4a" stroke-width="0.900"/>
  <polygon points="92.500,313.500 99.200,309.500 106,313.500 102.500,315.600 99.200,313.700 96,315.600" fill="#e8f6fb" stroke="#29b4dc" stroke-width="1"/>
  <!-- checks -->
  <use href="#chk" x="254" y="262.500"/><use href="#chk" x="254" y="280.500"/><use href="#chk" x="254" y="298.500"/><use href="#chk" x="254" y="316.500"/>
  <!-- dependency icon -->
  <g stroke="#333" stroke-width="0.800" stroke-linecap="butt">
    <path d="M230.500,310.500 V321.500 M230.500,312 H232.500 M230.500,316 H232.500 M230.500,320 H232.500"/>
    <rect x="232.700" y="310.800" width="2.600" height="2.400" fill="#fff"/>
    <rect x="232.700" y="314.800" width="2.600" height="2.400" fill="#f5861a" stroke="#e06c0a"/>
    <rect x="232.700" y="318.800" width="2.600" height="2.400" fill="#fff"/>
  </g>
  <!-- navigator title icon -->
  <use href="#brk" transform="translate(41.300,163) scale(0.570,0.570)"/>
</svg>
<!-- scrollbar -->
<div class="abs" style="left:44px;top:610px;width:258px;height:15px;background:#f0f0f0"></div>
<div class="abs" style="left:59px;top:611px;width:188px;height:13px;background:#cdcdcd"></div>
<svg style="left:0;top:600px" width="320" height="40" viewBox="0 600 320 40" fill="none"><path d="M53,614 L50,617.300 L53,620.600 M292.500,614 L295.500,617.300 L292.500,620.600" stroke="#333" stroke-width="1.400" stroke-linecap="round" stroke-linejoin="round"/></svg>
<div class="abs" style="left:43px;top:628px;width:260px;height:5px;border:1px solid #cdcde0;background:#eeeeea"></div>
<div class="tri" style="left:51px;top:641px"></div>
<div class="t sec" style="top:640px">搜尋</div>
<div class="hsep" style="left:43px;top:654px;width:260px;background:#c8c8d0"></div>
<div class="tri" style="left:51px;top:660px"></div>
<div class="t sec" style="top:659px">相關性</div>
<div class="hsep" style="left:43px;top:673px;width:260px;background:#c8c8d0"></div>
<div class="tri" style="left:51px;top:680px"></div>
<div class="t sec" style="top:679px">細節</div>
<div class="hsep" style="left:43px;top:693px;width:260px;background:#c8c8d0"></div>
<div class="tri" style="left:51px;top:699px"></div>
<div class="t sec" style="top:699px">預覽</div>
<div class="hsep" style="left:43px;top:712px;width:260px;background:#c8c8d0"></div>
<div class="vsep" style="left:310px;top:159px;height:559px;background:#d4d4e0"></div>

<!-- ================= TABS / GRAPHICS ================= -->
<div class="t" style="left:335px;top:164px;font-size:10.67px">發現中心</div>
<div class="t" style="left:421px;top:164px;font-size:11.8px;color:#15153a">model1.prt</div>
<div class="abs" style="left:397px;top:178px;width:113px;height:3px;background:#0f7590"></div>
<div class="abs" style="left:312px;top:180px;width:937px;height:2px;background:#0f7590"></div>
<div id="gfx" class="abs"></div>
<div class="vsep" style="left:1249px;top:182px;height:536px;background:#cfcfd9"></div>


<!-- ================= 3D MODEL ================= -->
<svg id="model" style="left:0;top:0" width="1280" height="745" viewBox="0 0 1280 745">
  <polygon points="659.8,371 779.6,426 682.6,455 562.8,400.6" fill="#adb6b7"/>
  <polygon points="562.8,400.6 682.6,455 682,508.4 562.8,452.8" fill="#70767a"/>
  <polygon points="682.6,455 779.6,426 779.6,478.4 682,508.4" fill="#8e9697"/>
  <g fill="none" stroke="#4563ff" stroke-width="1.4" stroke-linecap="round">
    <path d="M562.8,452.8 L659.8,424 L779.6,478.4"/>
    <path d="M562.8,452.8 L682,508.4 L779.6,478.4"/>
  </g>
  <g fill="none" stroke="#2b2d2e" stroke-width="1.2" stroke-linejoin="round" stroke-linecap="round">
    <path d="M659.8,371 L779.6,426 L682.6,455 L562.8,400.6 Z"/>
    <path d="M563,400.6 L563,452.5" stroke="#444748" stroke-width="1.5"/>
    <path d="M779.6,426 L779.6,478.4" stroke-width="1.3"/>
  </g>
  <path d="M659.8,371 L659.8,424" stroke="#666c6e" stroke-width="1.2" fill="none"/>
  <!-- datum csys -->
  <g fill="none" stroke="#b27373" stroke-width="1">
    <path d="M682.5,514 L682.5,452"/>
    <path d="M676,508.5 L682,508.5"/>
    <path d="M682.5,474 L705.5,485 L705.5,518"/>
    <path d="M682.5,474 L712,465 L712,500.5"/>
    <path d="M705.5,518.5 L734,510 L712,500.5"/>
    <path d="M682.5,508 L720,526"/>
    <path d="M682.5,508 L730,494" stroke-dasharray="1.2,1.2"/>
  </g>
  <polygon points="682.5,441 685.3,455 679.7,455" fill="#a86a6a"/>
  <polygon points="728.5,530.5 717,528.5 720,522.5" fill="#a86a6a"/>
  <polygon points="739,491.3 728.5,497 727.5,491.5" fill="#a86a6a"/>
  <text x="682.3" y="439" font-size="10.5" fill="#b27373" text-anchor="middle" font-family="Liberation Sans, sans-serif">Z</text>
  <text x="733" y="536" font-size="10.5" fill="#b27373" text-anchor="middle" font-family="Liberation Sans, sans-serif">X</text>
  <text x="744.5" y="494" font-size="9.5" fill="#c08a8a" text-anchor="middle" font-family="Liberation Sans, sans-serif">Y</text>
  <!-- view triad -->
  <g fill="none" stroke="#b4b4b4" stroke-width="1">
    <path d="M388.7,619.4 L408.2,628.3 L385,634.5 L366.3,626 Z"/>
    <path d="M366.3,626 L366.3,653.4 L385,662.3 L408.2,655.6 L408.2,628.3"/>
    <path d="M385,634.5 L385,662.3"/>
  </g>
  <path d="M387,627.5 L387,604" stroke="#0a2fe0" stroke-width="3" fill="none"/>
  <polygon points="387,593 391.2,606.5 382.8,606.5" fill="#0a2fe0"/>
  <path d="M409,634 L421,631" stroke="#2f9a3c" stroke-width="3" fill="none"/>
  <polygon points="428.5,628.5 419.5,634.8 418,627.5" fill="#2f9a3c"/>
  <path d="M396,645 L412,652.5" stroke="#c2303c" stroke-width="3.2" fill="none"/>
  <polygon points="420.5,655.5 409,655.8 412.5,648" fill="#c2303c"/>
  <text x="387" y="589" font-size="11" fill="#2a55f0" text-anchor="middle" font-family="Liberation Sans, sans-serif">Z</text>
  <text x="433.5" y="631" font-size="10.5" fill="#2f9a3c" text-anchor="middle" font-family="Liberation Sans, sans-serif">Y</text>
  <text x="425" y="662" font-size="10.5" fill="#c2404a" text-anchor="middle" font-family="Liberation Sans, sans-serif">X</text>
</svg>

<!-- tab icons -->
<svg id="tbicons" style="left:0;top:0" width="1280" height="745" viewBox="0 0 1280 745" fill="none" stroke-linejoin="round" stroke-linecap="round">
  <!-- discovery -->
  <g stroke="#34343e" stroke-width="1.100">
    <path d="M318.300,170 V163.600 L322.300,166.200 L326.500,163.300 L330.300,164 V174.700 L326.500,173.700 V163.300"/>
    <path d="M328.400,164.200 V174"  stroke-width="0.700"/>
    <circle cx="321.700" cy="171.500" r="4.800" fill="#f3f3ef"/>
    <path d="M319.700,173.300 L321,170.800 L323.700,169.700 L322.400,172.300 Z" stroke-width="0.800" fill="#9a9a9a"/>
  </g>
  <!-- model tab icon -->
  <use href="#brk" transform="translate(401.700,162.800) scale(0.670,0.640)"/>
  <!-- detach -->
  <g stroke="#1b1b30" stroke-width="1.100">
    <path d="M488.500,171 V174.500 H482.500 V166.500 H485"/>
    <path d="M485.500,170.500 C485.500,168 487,166.500 489.500,166.500 M487.800,164.800 L489.800,166.500 L487.800,168.300"/>
  </g>
  <path d="M497.700,166 L503.700,172.500 M503.700,166 L497.700,172.500" stroke="#101024" stroke-width="1.900" stroke-linecap="butt"/>
  <!-- right bar -->
  <g transform="translate(1254.500,171)">
    <polygon points="0,6.500 4.700,9.300 4.700,19 0,16" fill="#f6f6f6"/>
    <polygon points="4.700,9.300 10.300,6 10.300,15.500 4.700,19" fill="#9c9c9c"/>
    <polygon points="10.300,6 16,9.300 16,19 10.300,15.500" fill="#f0f0f0"/>
    <polygon points="16,9.300 21,6.500 21,16 16,19" fill="#9a9a9a"/>
    <path d="M0,6.500 V16 L4.700,19 L10.300,15.500 L16,19 L21,16 V6.500" stroke="#4a4a4a" stroke-width="0.900"/>
    <polygon points="0,6.500 10.500,0.500 21,6.500 16,9.300 10.300,6 4.700,9.300" fill="#eaf7fc" stroke="#29b4dc" stroke-width="1.100"/>
  </g>
  <circle cx="1265" cy="209" r="9.800" stroke="#2e2e3a" stroke-width="1" fill="#f7f7f5"/>
  <rect x="1255.500" y="228.500" width="19" height="18.500" fill="#9a1010"/>
  <path d="M1254,257.500 H1277" stroke="#c9c9d3" stroke-width="1" stroke-linecap="butt"/>
  <polygon points="1260,708.500 1260,713.500 1256.700,711" fill="#101024"/>
</svg>
<div class="t" style="left:1265px;top:201px;font-size:16px;color:#2e2e3a;transform:translateX(-50%)">?</div>
<div class="t" style="left:1265px;top:234px;font-size:11px;font-weight:bold;color:#fff;transform:translateX(-50%) scaleX(0.88);letter-spacing:-0.2px">Dc</div>
<!-- ================= STATUS ================= -->
<div class="hsep" style="left:1px;top:718px;width:1279px;height:2px;background:#d3d3de"></div>
<div class="t" style="left:4px;top:724px;font-size:10px">選取物件並使用 MB3，或者雙擊某一物件</div>
<div class="abs" style="left:0;top:739px;width:1280px;height:6px;background:#23233d"></div>
</body>
</html>
